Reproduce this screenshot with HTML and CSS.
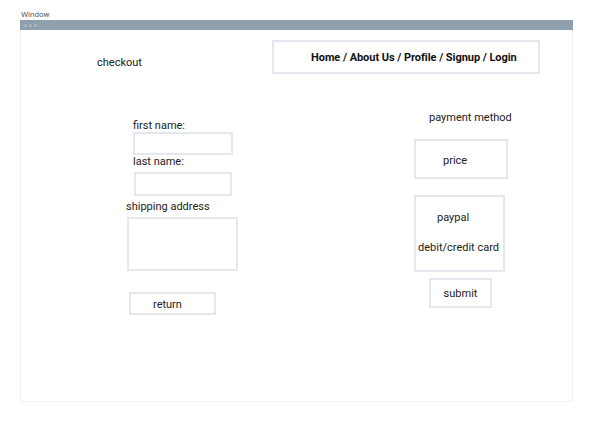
FILE: index.html
```html
<!DOCTYPE html>
<html>
<head>
<meta charset="utf-8">
<link rel="stylesheet" href="styles.css">
</head>
<body>
<div class="frame">
  <div class="caption">Window</div>
  <div class="titlebar"><span class="dot"></span><span class="dot"></span><span class="dot"></span></div>
  <div class="window">
    <div class="top">
      <div class="title">checkout</div>
      <div class="nav">Home / About Us / Profile / Signup / Login</div>
    </div>
    <div class="main">
      <div class="left">
        <div class="label l-first">first name:</div>
        <div class="field f-first"></div>
        <div class="label l-last">last name:</div>
        <div class="field f-last"></div>
        <div class="label l-ship">shipping address</div>
        <div class="field f-ship"></div>
        <div class="box btn-return">return</div>
      </div>
      <div class="right">
        <div class="label l-pay">payment method</div>
        <div class="box price">price</div>
        <div class="box methods">
          <div class="m-paypal">paypal</div>
          <div class="m-card">debit/credit card</div>
        </div>
        <div class="box btn-submit">submit</div>
      </div>
    </div>
  </div>
</div>
</body>
</html>
```
FILE: styles.css
```css
html, body {
  margin: 0;
  padding: 0;
  background: #ffffff;
}
body {
  font-family: "Roboto", "Liberation Sans", sans-serif;
  color: #222222;
  font-size: 11px;
}
.frame {
  padding: 10px 0 0 20px;
  width: 553px;
}
.caption {
  font-size: 8px;
  line-height: 10px;
  color: #555d66;
  padding-left: 1px;
}
.titlebar {
  height: 10px;
  background: #8e9fae;
  display: flex;
  align-items: center;
  gap: 2px;
  padding-left: 4px;
}
.dot {
  width: 3px;
  height: 3px;
  border-radius: 50%;
  background: #a9b6c2;
}
.window {
  height: 372px;
  box-sizing: border-box;
  border: 1px solid #f0f0f0;
  border-top: none;
  box-shadow: 0 1px 2px rgba(0,0,0,0.04);
  display: flex;
  flex-direction: column;
}
.top {
  height: 70px;
  display: flex;
  align-items: flex-start;
}
.title {
  margin-left: 76px;
  margin-top: 26px;
  line-height: 14px;
}
.nav {
  margin-left: auto;
  margin-right: 32px;
  margin-top: 10px;
  width: 268px;
  height: 34px;
  box-sizing: border-box;
  border: 2px solid #e3e8ee;
  padding-left: 37px;
  padding-top: 1px;
  display: flex;
  align-items: center;
  font-weight: 700;
  color: #111111;
  letter-spacing: -0.05px;
}
.main {
  display: flex;
}
.left {
  margin-left: 105px;
  width: 120px;
  display: flex;
  flex-direction: column;
  align-items: flex-start;
}
.label {
  line-height: 12px;
  padding-top: 2px;
}
.field, .box {
  box-sizing: border-box;
  border: 2px solid #e3e8ee;
}
.l-first { margin-left: 7px; margin-top: 18px; }
.f-first { margin-left: 7px; width: 100px; height: 23px; }
.l-last { margin-left: 7px; margin-top: -1px; }
.f-last { margin-left: 8px; margin-top: 4px; width: 98px; height: 24px; }
.l-ship { margin-top: 3px; }
.f-ship { margin-left: 1px; margin-top: 4px; width: 111px; height: 54px; }
.btn-return {
  margin-left: 3px;
  margin-top: 21px;
  width: 87px;
  height: 23px;
  display: flex;
  align-items: center;
  padding-left: 22px;
  padding-top: 1px;
}
.right {
  margin-left: 168px;
  display: flex;
  flex-direction: column;
  align-items: flex-start;
}
.l-pay { margin-left: 15px; margin-top: 10px; }
.price {
  margin-top: 15px;
  width: 94px;
  height: 40px;
  padding-left: 27px;
  padding-top: 2px;
  display: flex;
  align-items: center;
}
.methods {
  margin-top: 16px;
  width: 91px;
  height: 77px;
  padding-top: 14px;
}
.m-paypal { margin-left: 21px; line-height: 14px; }
.m-card { margin-left: 2px; margin-top: 16px; line-height: 14px; }
.btn-submit {
  margin-top: 6px;
  margin-left: 15px;
  width: 63px;
  height: 30px;
  display: flex;
  align-items: center;
  justify-content: center;
  padding-top: 1px;
}
```
